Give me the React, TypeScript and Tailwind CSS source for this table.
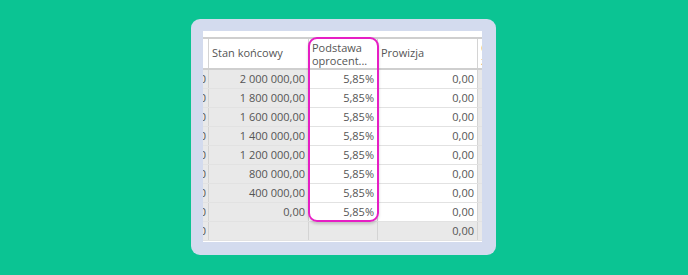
const rows = [
  "2 000 000,00",
  "1 800 000,00",
  "1 600 000,00",
  "1 400 000,00",
  "1 200 000,00",
  "800 000,00",
  "400 000,00",
  "0,00",
];

const cols = "grid grid-cols-[6px_100px_69px_100px_1fr]";

export default function App() {
  return (
    <div className="w-[688px] h-[275px] bg-[#0bc493] pl-[191px] pt-[19px] overflow-hidden">
      <div className="w-[305px] h-[236px] rounded-[9px] bg-[#d3dbee] pl-[12px] pt-[12px]">
        <div
          className="relative w-[279px] h-[211px] bg-white overflow-hidden pt-[6px] text-[11px] text-[#555555]"
          style={{ fontFamily: '"Open Sans", "Noto Sans", sans-serif' }}
        >
          {/* header */}
          <div className={`${cols} h-[33px] border-y-2 border-[#cfcfcf] bg-white`}>
            <div className="border-r border-[#d4d4d4]" />
            <div className="flex items-center border-r border-[#d4d4d4] pl-[3px]">Stan końcowy</div>
            <div className="flex flex-col justify-center border-r border-[#d4d4d4] pl-[3px] leading-[13px]">
              <span>Podstawa</span>
              <span>oprocent...</span>
            </div>
            <div className="flex items-center border-r border-[#d4d4d4] pl-[3px]">Prowizja</div>
            <div className="flex flex-col justify-center overflow-hidden whitespace-nowrap pl-[3px] leading-[13px] text-[#b89070]">
              <span>Odsetki</span>
              <span>zapłacone</span>
            </div>
          </div>

          {/* data rows */}
          {rows.map((value) => (
            <div key={value} className={`${cols} h-[19px] border-b border-[#e2e2e2]`}>
              <div className="flex items-center justify-end overflow-hidden border-r border-[#d4d4d4] bg-[#e9e9e9] pr-[2px]">
                0
              </div>
              <div className="flex items-center justify-end border-r border-[#d4d4d4] bg-[#e9e9e9] pr-[3px] whitespace-nowrap">
                {value}
              </div>
              <div className="flex items-center justify-end border-r border-[#d4d4d4] pr-[3px]">5,85%</div>
              <div className="flex items-center justify-end border-r border-[#d4d4d4] pr-[3px]">0,00</div>
              <div className="bg-[#e9e9e9]" />
            </div>
          ))}

          {/* total row */}
          <div className={`${cols} h-[19px] border-b border-[#e2e2e2] bg-[#e9e9e9]`}>
            <div className="flex items-center justify-end overflow-hidden border-r border-[#d4d4d4] pr-[2px]">0</div>
            <div className="border-r border-[#d4d4d4]" />
            <div className="border-r border-[#d4d4d4]" />
            <div className="flex items-center justify-end border-r border-[#d4d4d4] pr-[3px]">0,00</div>
            <div />
          </div>

          {/* highlight around the rate column */}
          <div className="absolute left-[105px] top-[6px] w-[71px] h-[185px] rounded-[9px] border-2 border-[#e61ec4] shadow-[0_2px_3px_rgba(0,0,0,0.18)]" />
        </div>
      </div>
    </div>
  );
}
